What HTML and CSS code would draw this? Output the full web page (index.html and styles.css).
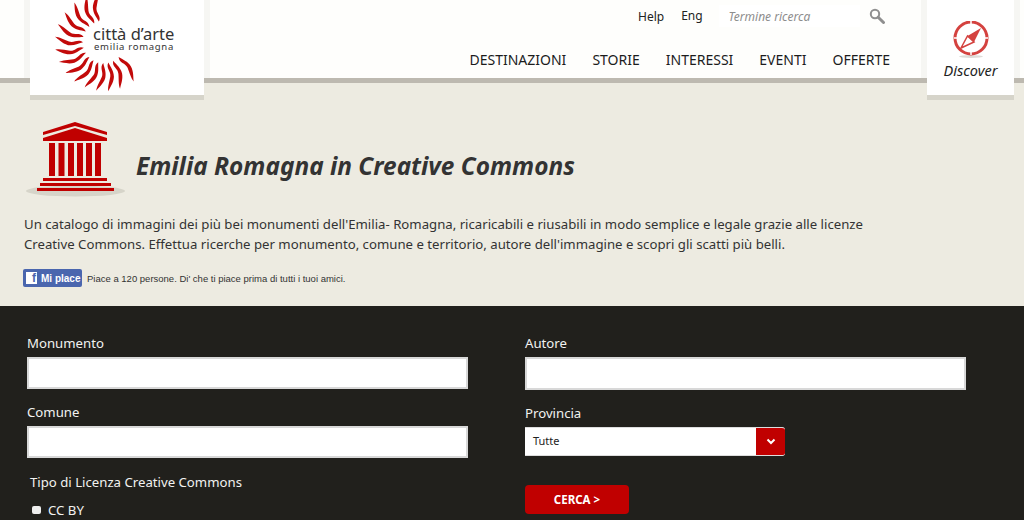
FILE: index.html
```html
<!DOCTYPE html>
<html lang="it">
<head>
  <meta charset="UTF-8">
  <title>Emilia Romagna in Creative Commons</title>
  <link rel="stylesheet" href="styles.css">
</head>
<body>
  <header class="site-header">
    <div class="tab-wrap">
      <a class="logo-box" href="#">
        <svg class="logo-sun" width="174" height="95" viewBox="0 0 174 95">
          <defs>
            <path id="ray" d="M-21 0C-26 -4 -30 1 -35 -1C-40 -3 -45 -6 -49 -6C-46 -4 -42 1 -36 2.500C-30 3.500 -27 1.500 -21 0Z"/>
          </defs>
          <g transform="translate(74 42)" fill="#c20a0a">
            <use href="#ray" transform="rotate(76)"/>
            <use href="#ray" transform="rotate(62)"/>
            <use href="#ray" transform="rotate(46)"/>
            <use href="#ray" transform="rotate(30)"/>
            <use href="#ray" transform="rotate(14)"/>
            <use href="#ray" transform="rotate(-1)"/>
            <use href="#ray" transform="rotate(-16)"/>
            <use href="#ray" transform="rotate(-31)"/>
            <use href="#ray" transform="rotate(-46)"/>
            <use href="#ray" transform="rotate(-60)"/>
            <use href="#ray" transform="rotate(-74)"/>
            <use href="#ray" transform="rotate(-88)"/>
            <use href="#ray" transform="rotate(-102)"/>
            <use href="#ray" transform="rotate(-116)"/>
            <use href="#ray" transform="rotate(-134)"/>
          </g>
          <text class="logo-name" x="63" y="40">città d’arte</text>
          <text class="logo-sub" x="64" y="50">emilia romagna</text>
        </svg>
      </a>
    </div>

    <div class="header-main">
      <div class="top-links">
        <a class="help-link" href="#">Help</a>
        <a class="lang-link" href="#">Eng</a>
        <div class="search-box">Termine ricerca</div>
        <svg class="search-icon" width="16" height="16" viewBox="0 0 16 16">
          <circle cx="6" cy="6" r="4.200" fill="none" stroke="#8f8f8f" stroke-width="2"/>
          <path d="M9.200 9.200L14.500 14.500" stroke="#8f8f8f" stroke-width="3" stroke-linecap="round"/>
        </svg>
      </div>
      <nav class="main-nav">
        <a href="#">DESTINAZIONI</a>
        <a href="#">STORIE</a>
        <a href="#">INTERESSI</a>
        <a href="#">EVENTI</a>
        <a href="#">OFFERTE</a>
      </nav>
    </div>

    <div class="tab-wrap">
      <a class="discover-box" href="#">
        <svg width="36" height="38" viewBox="0 0 36 38">
          <ellipse cx="18" cy="35.500" rx="12" ry="1.500" fill="#dddcd8"/>
          <circle cx="18" cy="17" r="16" fill="none" stroke="#d4423f" stroke-width="3"/>
          <path d="M18 0V4M18 30V34M1 17H5M31 17H35" stroke="#fff" stroke-width="1.500"/>
          <path d="M28 7L21 21L14.500 15Z" fill="#d4423f"/>
          <path d="M8 27L14.500 15L21 21Z" fill="none" stroke="#d4423f" stroke-width="1.500"/>
        </svg>
        <span>Discover</span>
      </a>
    </div>
  </header>

  <section class="intro">
    <div class="intro-head">
      <svg class="temple" width="100" height="76" viewBox="0 0 100 76">
        <ellipse cx="51.500" cy="70" rx="49.500" ry="5.500" fill="#d6d4c9"/>
        <g fill="#c00000">
          <path d="M19 11L51 1L83 11V14L51 5L19 14Z"/>
          <path d="M19 17L51 7L83 17V20H19Z"/>
          <rect x="25" y="22" width="6" height="33"/>
          <rect x="34.500" y="22" width="6" height="33"/>
          <rect x="44" y="22" width="6" height="33"/>
          <rect x="53" y="22" width="6" height="33"/>
          <rect x="62" y="22" width="6" height="33"/>
          <rect x="71" y="22" width="6" height="33"/>
          <rect x="19" y="57" width="64" height="3"/>
          <rect x="16" y="62" width="71" height="3"/>
          <rect x="13" y="67" width="77" height="3"/>
        </g>
      </svg>
      <h1>Emilia Romagna in Creative Commons</h1>
    </div>
    <p class="intro-text">Un catalogo di immagini dei più bei monumenti dell'Emilia- Romagna, ricaricabili e riusabili in modo semplice e legale grazie alle licenze Creative Commons. Effettua ricerche per monumento, comune e territorio, autore dell'immagine e scopri gli scatti più belli.</p>
    <div class="fb-row">
      <a class="fb-btn" href="#"><span class="fb-f">f</span>Mi place</a>
      <span>Piace a 120 persone. Di' che ti piace prima di tutti i tuoi amici.</span>
    </div>
  </section>

  <section class="search-panel">
    <div class="search-col">
      <label class="field-label">Monumento</label>
      <input class="text-field" type="text">
      <label class="field-label">Comune</label>
      <input class="text-field" type="text">
      <div class="licence-title">Tipo di Licenza Creative Commons</div>
      <div class="licence-row"><span class="check"></span>CC BY</div>
    </div>
    <div class="search-col">
      <label class="field-label">Autore</label>
      <input class="text-field" type="text">
      <label class="field-label">Provincia</label>
      <div class="select-field">
        <span class="select-value">Tutte</span>
        <span class="select-arrow">
          <svg width="10" height="7" viewBox="0 0 10 7"><path d="M1.500 1.500L5 5L8.500 1.500" fill="none" stroke="#fff" stroke-width="2"/></svg>
        </span>
      </div>
      <button class="search-btn">CERCA &gt;</button>
    </div>
  </section>
</body>
</html>
```

FILE: styles.css
```css
html, body {
  height: 520px;
  overflow: hidden;
}
body {
  margin: 0;
  background-color: #edebe1;
  font-family: "Noto Sans", "Open Sans", sans-serif;
  color: #333;
}
a {
  color: inherit;
  text-decoration: none;
}

/* header */
.site-header {
  display: flex;
  align-items: flex-start;
  height: 78px;
  padding-left: 24px;
  background-color: #fefefc;
  border-bottom: 5px solid #bdb9b0;
}
.tab-wrap {
  flex: none;
  height: 78px;
  padding: 0 6px;
  background-color: #f6f6f3;
}
.logo-box {
  display: block;
  width: 174px;
  height: 95px;
  background-color: #fff;
  border-bottom: 5px solid #d6d4ca;
  position: relative;
}
.logo-sun {
  display: block;
}
.logo-name {
  font-size: 16.500px;
  fill: #333;
}
.logo-sub {
  font-size: 9.500px;
  letter-spacing: 0.7px;
  fill: #333;
}
.header-main {
  flex: none;
  width: 711px;
  height: 78px;
  display: flex;
  flex-direction: column;
  align-items: flex-end;
}
.top-links {
  display: flex;
  align-items: center;
  width: 100%;
  height: 22px;
  margin-top: 5px;
  padding-left: 428px;
  box-sizing: border-box;
  font-size: 12px;
  color: #222;
}
.help-link {
  margin-right: 17px;
}
.lang-link {
  margin-right: 16px;
  position: relative;
  top: -1px;
}
.search-box {
  width: 131px;
  height: 22px;
  padding-left: 10px;
  line-height: 24px;
  background-color: #fff;
  font-style: italic;
  color: #8d8d8d;
}
.search-icon {
  margin-left: 9px;
}
.main-nav {
  display: flex;
  gap: 26px;
  margin-top: 23px;
  padding-right: 31px;
  font-size: 14px;
  line-height: 20px;
  color: #1c1c1c;
}
.discover-box {
  display: flex;
  flex-direction: column;
  align-items: center;
  width: 87px;
  height: 74px;
  padding-top: 21px;
  background-color: #fff;
  border-bottom: 5px solid #d6d4ca;
  font-size: 14.500px;
  font-style: italic;
  color: #222;
  position: relative;
}
.discover-box span {
  margin-top: 1px;
}

/* intro */
.intro {
  height: 223px;
  box-sizing: border-box;
  padding: 38px 0 0 24px;
}
.intro-head {
  display: flex;
  align-items: center;
  height: 76px;
}
.temple {
  flex: none;
  margin-right: 12px;
  overflow: visible;
}
.intro-head h1 {
  margin: 0;
  font-size: 24.400px;
  font-style: italic;
  font-weight: 700;
  color: #333;
  position: relative;
  top: 6px;
}
.intro-text {
  width: 880px;
  margin: 18px 0 0;
  font-size: 13.200px;
  line-height: 19.500px;
  color: #333;
}
.fb-row {
  display: flex;
  align-items: center;
  gap: 5px;
  margin-top: 15px;
  margin-left: -1px;
  font-family: "Liberation Sans", sans-serif;
  font-size: 9.500px;
  color: #333;
}
.fb-btn {
  display: flex;
  align-items: center;
  width: 59px;
  height: 18px;
  box-sizing: border-box;
  padding-left: 3px;
  border-radius: 2px;
  background-color: #4a66ae;
  color: #fff;
  font-size: 10px;
  font-weight: 700;
}
.fb-f {
  width: 11px;
  height: 12px;
  margin-right: 4px;
  padding-right: 1px;
  box-sizing: border-box;
  background-color: #fff;
  color: #4a66ae;
  font-size: 12px;
  line-height: 13px;
  text-align: right;
}

/* dark search panel */
.search-panel {
  display: flex;
  gap: 57px;
  height: 214px;
  box-sizing: border-box;
  padding: 27px 0 0 27px;
  background-color: #21201c;
  color: #f2f2f0;
  font-size: 13.200px;
}
.search-col {
  width: 441px;
  display: flex;
  flex-direction: column;
  align-items: flex-start;
}
.field-label {
  height: 24px;
  line-height: 21px;
}
.text-field {
  display: block;
  width: 441px;
  height: 33px;
  box-sizing: border-box;
  margin: 0 0 13px;
  border: 2px solid #d8d8d8;
  background-color: #fff;
}
.licence-title {
  margin: 1px 0 0 3px;
  line-height: 20px;
}
.licence-row {
  display: flex;
  align-items: center;
  margin: 8px 0 0 5px;
  line-height: 20px;
}
.check {
  width: 9px;
  height: 8px;
  margin-right: 7px;
  border-radius: 2px;
  background-color: #eee;
}
.select-field {
  display: flex;
  width: 260px;
  height: 29px;
  box-sizing: border-box;
  border-top: 1px solid #ddd;
  border-bottom: 1px solid #ddd;
  border-radius: 0 3px 3px 0;
  overflow: hidden;
  background-color: #fff;
  color: #222;
  font-size: 11px;
}
.select-value {
  flex: 1;
  padding-left: 8px;
  line-height: 26px;
}
.select-arrow {
  display: flex;
  align-items: center;
  justify-content: center;
  width: 29px;
  margin: -1px 0;
  background-color: #c00000;
}
.search-btn {
  width: 104px;
  height: 29px;
  margin-top: 29px;
  border: none;
  border-radius: 4px;
  background-color: #c00000;
  color: #fff;
  font-family: inherit;
  font-size: 11.500px;
  font-weight: 700;
  cursor: pointer;
}
```
